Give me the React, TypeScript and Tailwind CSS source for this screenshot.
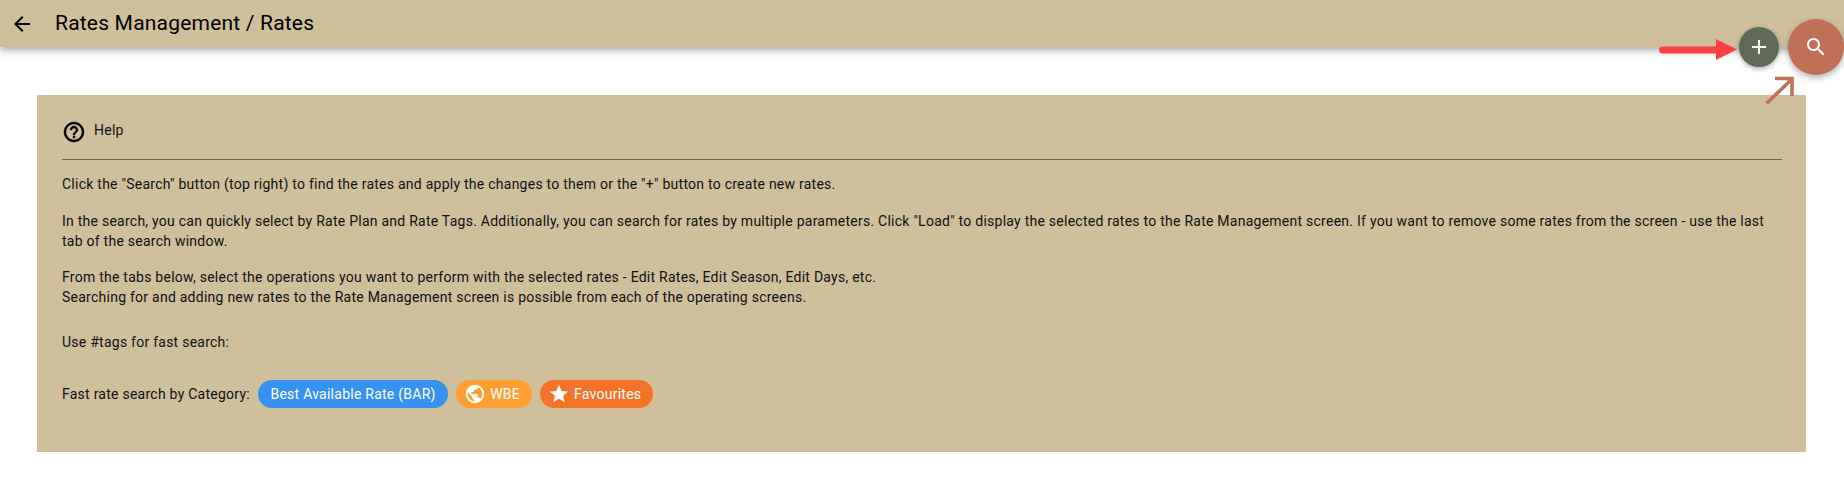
function Chip({ label, color, icon }: { label: string; color: string; icon?: React.ReactNode }) {
  return (
    <span className={`inline-flex h-7 items-center gap-[4px] rounded-full ${icon ? "pl-2 pr-3" : "px-[12.5px]"} text-sm tracking-[0.25px] text-white ${color}`}>
      {icon}
      {label}
    </span>
  );
}

function PublicIcon() {
  return (
    <svg viewBox="0 0 24 24" className="h-[22px] w-[22px] fill-white">
      <path d="M12 2C6.48 2 2 6.48 2 12s4.48 10 10 10 10-4.48 10-10S17.52 2 12 2zm-1 17.93c-3.95-.49-7-3.85-7-7.93 0-.62.08-1.21.21-1.79L9 15v1c0 1.1.9 2 2 2v1.93zm6.9-2.54c-.26-.81-1-1.39-1.9-1.39h-1v-3c0-.55-.45-1-1-1H8v-2h2c.55 0 1-.45 1-1V7h2c1.1 0 2-.9 2-2v-.41c2.93 1.19 5 4.06 5 7.41 0 2.08-.8 3.97-2.1 5.39z" />
    </svg>
  );
}

function StarIcon() {
  return (
    <svg viewBox="0 0 24 24" className="h-[22px] w-[22px] fill-white">
      <path d="M12 17.27 18.18 21l-1.64-7.03L22 9.24l-7.19-.61L12 2 9.19 8.63 2 9.24l5.46 4.73L5.82 21z" />
    </svg>
  );
}

export default function App() {
  return (
    <div className="relative h-[498px] overflow-hidden bg-white font-['Roboto',sans-serif] text-sm tracking-[0.25px] text-[#111]">
      <header className="flex h-[47px] items-center bg-[#cfbf9b] shadow-[0_3px_8px_rgba(0,0,0,0.35)]">
        <svg viewBox="0 0 24 24" className="ml-[10px] h-6 w-6 fill-black">
          <path d="M20 11H7.83l5.59-5.59L12 4l-8 8 8 8 1.41-1.41L7.83 13H20v-2z" />
        </svg>
        <h1 className="ml-[21px] text-[21px] font-normal leading-none tracking-[0.2px] text-black">Rates Management / Rates</h1>
      </header>

      <button className="absolute left-[1739px] top-[27px] flex h-10 w-10 items-center justify-center rounded-full bg-[#5f6b54] shadow-[0_2px_5px_rgba(0,0,0,0.3)]">
        <svg viewBox="0 0 24 24" className="h-6 w-6 fill-white">
          <path d="M19 13h-6v6h-2v-6H5v-2h6V5h2v6h6v2z" />
        </svg>
      </button>
      <button className="absolute left-[1788px] top-[19px] flex h-14 w-14 items-center justify-center rounded-full bg-[#c07055] shadow-[0_3px_6px_rgba(0,0,0,0.3)]">
        <svg viewBox="0 0 24 24" className="h-6 w-6 fill-white">
          <path d="M15.5 14h-.79l-.28-.27C15.41 12.59 16 11.11 16 9.5 16 5.91 13.09 3 9.5 3S3 5.91 3 9.5 5.91 16 9.5 16c1.61 0 3.09-.59 4.23-1.57l.27.28v.79l5 4.99L20.49 19l-4.99-5zm-6 0C7.01 14 5 11.99 5 9.5S7.01 5 9.5 5 14 7.01 14 9.5 11.99 14 9.5 14z" />
        </svg>
      </button>

      <svg className="absolute left-[1655px] top-[36px] z-10" width="84" height="26" viewBox="0 0 84 26">
        <path d="M7.5 14H62" stroke="#fb4141" strokeWidth="7" strokeLinecap="round" />
        <path d="M61 3l21 10.5L61 24z" fill="#fb4141" />
      </svg>
      <svg className="absolute left-[1764px] top-[74px] z-10" width="34" height="34" viewBox="0 0 34 34">
        <path d="M2.5 29.5L28 5M11 4.5h17V22" stroke="#c07055" strokeWidth="3.5" fill="none" />
      </svg>

      <main className="ml-[37px] mr-[38px] mt-[48px] h-[357px] bg-[#cfbf9b] pl-[25px] pr-[24px] pt-[25px]">
        <div className="flex h-[39px] items-start gap-[8px]">
          <svg viewBox="0 0 24 24" className="h-6 w-6 fill-black stroke-black stroke-[0.4]">
            <path d="M11 18h2v-2h-2v2zm1-16C6.48 2 2 6.48 2 12s4.48 10 10 10 10-4.48 10-10S17.52 2 12 2zm0 18c-4.41 0-8-3.59-8-8s3.59-8 8-8 8 3.59 8 8-3.59 8-8 8zm0-14c-2.21 0-4 1.79-4 4h2c0-1.1.9-2 2-2s2 .9 2 2c0 2-3 1.75-3 5h2c0-2.25 3-2.5 3-5 0-2.21-1.79-4-4-4z" />
          </svg>
          <span className="leading-5">Help</span>
        </div>
        <hr className="border-t border-[#6b6e50]" />
        <p className="mt-[14px] leading-5">
          Click the "Search" button (top right) to find the rates and apply the changes to them or the "+" button to create new rates.
        </p>
        <p className="mt-[17px] leading-5">
          In the search, you can quickly select by Rate Plan and Rate Tags. Additionally, you can search for rates by multiple parameters. Click "Load" to display the selected rates to the Rate Management screen. If you want to remove some rates from the screen - use the last tab of the search window.
        </p>
        <p className="mt-[16px] leading-5">
          From the tabs below, select the operations you want to perform with the selected rates - Edit Rates, Edit Season, Edit Days, etc.
          <br />
          Searching for and adding new rates to the Rate Management screen is possible from each of the operating screens.
        </p>
        <p className="mt-[25px] leading-5">Use #tags for fast search:</p>
        <div className="mt-[28px] flex items-center gap-2">
          <span>Fast rate search by Category:</span>
          <Chip label="Best Available Rate (BAR)" color="bg-[#3692f0]" />
          <Chip label="WBE" color="bg-[#ff9f31]" icon={<PublicIcon />} />
          <Chip label="Favourites" color="bg-[#f57328]" icon={<StarIcon />} />
        </div>
      </main>
    </div>
  );
}
